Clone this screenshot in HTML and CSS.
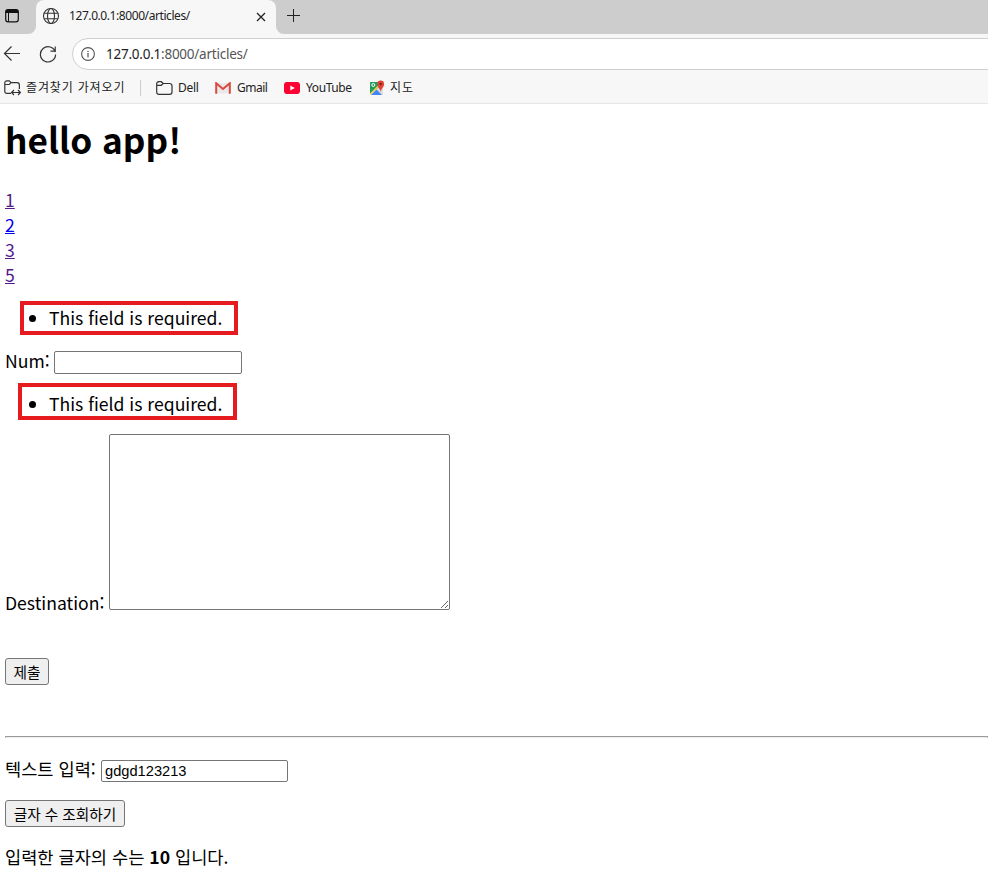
FILE: index.html
```html
<!DOCTYPE html>
<html lang="ko">
<head>
<meta charset="utf-8">
<title>127.0.0.1:8000/articles/</title>
<link rel="stylesheet" href="styles.css">
</head>
<body>
<header class="browser">
  <div class="tabs">
    <div class="workspace"><svg width="16" height="16" viewBox="0 0 16 16"><rect x="1.7" y="1.7" width="12.6" height="12.1" rx="2.4" fill="none" stroke="#111" stroke-width="1.2"/><path d="M1.5 5V4Q1.5 1.5 4 1.5h8Q14.5 1.5 14.5 4v1z" fill="#111"/><path d="M4.5 5v8.5" stroke="#111" stroke-width="1"/></svg></div>
    <div class="tab">
      <svg class="globe" width="18" height="18" viewBox="0 0 18 18" fill="none" stroke="#333" stroke-width="1.1"><circle cx="9" cy="9" r="7.5"/><ellipse cx="9" cy="9" rx="3.5" ry="7.5"/><path d="M2.2 6.3h13.6M2.2 11.7h13.6"/></svg>
      <span class="tab-title">127.0.0.1:8000/articles/</span>
      <svg class="close" width="10" height="10" viewBox="0 0 10 10"><path d="M1 1l8 8M9 1l-8 8" stroke="#222" stroke-width="1.3"/></svg>
    </div>
    <svg class="plus" width="14" height="14" viewBox="0 0 14 14"><path d="M6.5 0v13M0 6.5h13" stroke="#222" stroke-width="1"/></svg>
  </div>
  <div class="toolbar">
    <svg class="back" width="18" height="18" viewBox="0 0 18 18" fill="none" stroke="#333" stroke-width="1.2"><path d="M17 8.5H2M8.5 1.5L1.5 8.5l7 7"/></svg>
    <svg class="reload" width="18" height="18" viewBox="0 0 18 18" fill="none" stroke="#333" stroke-width="1.2"><path d="M16.3 7.2A7.6 7.6 0 1 0 16.6 9.5M16.2 1.5V6.1H11.5"/></svg>
    <div class="address">
      <svg width="14" height="14" viewBox="0 0 14 14"><circle cx="7" cy="7" r="6.4" fill="none" stroke="#555" stroke-width="1.1"/><path d="M7 6v4.2M7 3.7v1.3" stroke="#555" stroke-width="1.2"/></svg>
      <span class="url">127.0.0.1<i>:8000/articles/</i></span>
    </div>
  </div>
  <nav class="bookmarks">
    <svg class="import" width="18" height="16" viewBox="0 0 18 16" fill="none" stroke="#333" stroke-width="1.2"><path d="M7 13.4H3Q.8 13.4 .8 11.2V3Q.8 .8 3 .8h2.2L7.2 2.6H13Q15.4 2.6 15.4 5v4M.8 4.5h4.4l2-1.9M8 12.5h8M10 10l-2.4 2.5L10 15M14 10l2.4 2.5L14 15"/></svg>
    <span class="label import-label">즐겨찾기 가져오기</span>
    <span class="divider"></span>
    <svg class="folder" width="17" height="14" viewBox="0 0 17 14" fill="none" stroke="#333" stroke-width="1.2"><path d="M.7 3Q.7.7 3 .7h2.3l2 1.8h6.2Q16 2.5 16 4.8v6.1q0 2.4-2.4 2.4H3Q.7 13.3.7 11zM.7 4.3h4.5l2.1-1.8"/></svg>
    <span class="label dell">Dell</span>
    <svg class="gmail" width="16" height="12" viewBox="0 0 16 12"><path d="M1 1h14v10.5H1z" fill="#e9e9e9"/><path d="M1.2 11.7V1.2L8 7l6.8-5.8v10.5" fill="none" stroke="#d94b40" stroke-width="2"/></svg>
    <span class="label gmail-label">Gmail</span>
    <svg class="youtube" width="16" height="12" viewBox="0 0 16 12"><rect width="16" height="12" rx="3" fill="#ff0033"/><path d="M6.3 3.5v5L10.8 6z" fill="#fff"/></svg>
    <span class="label youtube-label">YouTube</span>
    <svg class="map" width="16" height="16" viewBox="0 0 16 16"><rect x="1" y="2" width="13" height="13" rx="1.3" fill="#ddd"/><path d="M1 14V3q0-1 1-1h8v5z" fill="#249b5a"/><path d="M2 15l5.5-5.5L13 15z" fill="#4285f4"/><path d="M1.2 14.2l8-8" stroke="#f7d34a" stroke-width="1.4"/><circle cx="4.3" cy="5" r="1.5" fill="none" stroke="#fff"/><path d="M11.6 12C11.2 8.5 8.3 7.3 8.3 4a3.4 3.4 0 0 1 6.8 0c0 3.3-3.1 4.5-3.5 8" fill="#e14436"/><circle cx="11.7" cy="4" r="1.2" fill="#79211c"/></svg>
    <span class="label map-label">지도</span>
  </nav>
</header>
<main>
  <h1><span>hello app!</span></h1>
  <nav class="articles"><a class="visited" href="#a1">1</a><a href="#a2">2</a><a class="visited" href="#a3">3</a><a class="visited" href="#a5">5</a></nav>
  <form>
    <ul class="error first"><li>This field is required.</li></ul>
    <div class="num-row"><label for="num">Num:</label><input id="num" type="text"></div>
    <ul class="error second"><li>This field is required.</li></ul>
    <div class="dest-row"><label for="dest">Destination:</label><textarea id="dest"></textarea></div>
    <button class="submit" type="button">제출</button>
  </form>
  <hr>
  <div class="text-row"><label for="text">텍스트 입력:</label><input id="text" type="text" value="gdgd123213"></div>
  <button class="count" type="button">글자 수 조회하기</button>
  <p class="result">입력한 글자의 수는 <b>10</b> 입니다.</p>
</main>
</body>
</html>
```
FILE: styles.css
```css
* { box-sizing: border-box; }
html { overflow: hidden; }
body { margin: 0; background: #fff; color: #000; font: 17.6px/25px "Noto Sans CJK KR", sans-serif; }
svg { display: block; flex: none; }
.browser { height: 104px; background: #f7f7f7; border-bottom: 1px solid #e6e6e6; font-family: "Noto Sans", "Noto Sans CJK KR", sans-serif; color: #222; }
.tabs { height: 34px; display: flex; background: linear-gradient(90deg, #cdcdcd 0 20px, #f7f7f7 20px 292px, #cdcdcd 292px); }
.workspace { width: 36px; height: 34px; padding: 8px 0 0 4px; background: #cdcdcd; border-bottom-right-radius: 8px; }
.tab { width: 240px; height: 34px; background: #f7f7f7; display: flex; align-items: center; padding: 0 10px 3px 6px; position: relative; }
.tab::before { content: ""; position: absolute; left: 0; top: 0; width: 240px; height: 9px; background: #cdcdcd; }
.tab::after { content: ""; position: absolute; left: 0; top: 0; width: 240px; height: 10px; background: #f7f7f7; border-radius: 8px 8px 0 0; }
.tab > * { z-index: 1; }
.tab-title { font-size: 12px; margin-left: 9px; white-space: nowrap; letter-spacing: -.42px; }
.close { margin: 2px 0 0 auto; }
.tabs > .plus { width: 712px; height: 34px; padding: 9px 687px 11px 11px; background: #cdcdcd; border-bottom-left-radius: 8px; }
.toolbar { height: 38px; padding-top: 4px; display: flex; align-items: flex-start; }
.back { margin: 7px 0 0 3px; }
.reload { margin: 7px 0 0 18px; }
.address { width: 940px; height: 32px; flex: none; margin-left: 15px; border: 1px solid #cfcfcf; border-radius: 16px; background: #fff; display: flex; align-items: center; padding-left: 8px; }
.url { font-size: 13.5px; margin-left: 11px; letter-spacing: -.24px; }
.url i { font-style: normal; color: #555; }
.bookmarks { height: 31px; display: flex; align-items: center; font-size: 12px; }
.import { margin-left: 4px; }
.label { white-space: nowrap; line-height: 20px; }
.import-label { width: 102px; margin-left: 4px; letter-spacing: .88px; }
.divider { width: 1px; height: 16px; margin-left: 12px; background: #ccc; }
.folder { margin-left: 15px; }
.dell { margin-left: 5px; width: 21px; letter-spacing: -.3px; }
.gmail { margin-left: 16px; }
.gmail-label { margin-left: 6px; width: 31px; letter-spacing: -.5px; }
.youtube { margin-left: 16px; }
.youtube-label { margin-left: 6px; width: 47px; letter-spacing: -.4px; }
.map { margin-left: 16px; }
.map-label { margin-left: 5px; letter-spacing: .9px; }
main { padding-left: 5px; }
h1 { margin: 0; height: 83px; padding-top: 9px; font-size: 35.2px; line-height: 52px; }
.articles { display: flex; flex-direction: column; align-items: flex-start; }
a { color: #00e; }
a.visited { color: #551a8b; }
.error { margin: 0; padding: 0 0 0 25px; line-height: 25px; border: 4px solid #e61b1f; white-space: nowrap; }
.first { width: 218px; height: 34px; margin: 14px 0 0 15px; }
.second { width: 219px; height: 37px; margin: 9px 0 0 13px; padding: 4px 0 0 27px; }
input, textarea { margin: 0; border: 1px solid #767676; border-radius: 2px; background: #fff; padding: 1px 3px; font: 14.67px "Liberation Sans", sans-serif; }
.num-row { display: flex; height: 23px; margin-top: 16px; }
.num-row label { width: 49px; line-height: 25px; margin-top: -3px; }
.num-row input { width: 188px; height: 23px; }
.dest-row { display: flex; align-items: flex-end; margin-top: 14px; height: 176px; }
.dest-row label { width: 104px; height: 20px; }
.dest-row textarea { width: 341px; height: 176px; }
button { display: block; margin: 0; padding: 0; border: 1px solid #767676; border-radius: 3px; background: #efefef; color: #000; font: 14.67px/25px "Noto Sans CJK KR", sans-serif; height: 27px; }
.submit { width: 44px; margin-top: 48px; }
hr { margin: 51px 0 0; border: 1px solid #9a9a9a; border-bottom-color: #eee; height: 2px; }
.text-row { display: flex; margin-top: 22px; height: 22px; }
.text-row label { width: 96px; margin-top: -4px; }
.text-row input { width: 187px; height: 22px; }
.count { width: 120px; margin-top: 18px; }
.result { margin: 17px 0 0; }
```
